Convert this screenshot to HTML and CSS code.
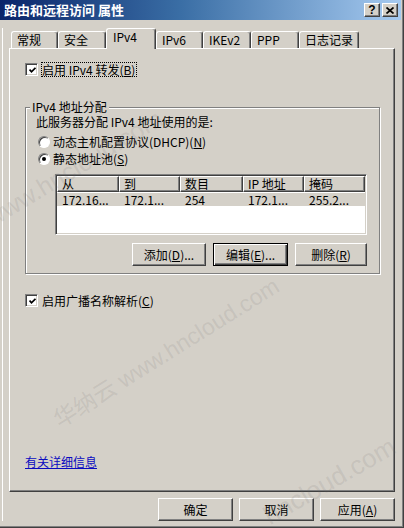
FILE: index.html
```html
<!DOCTYPE html>
<html lang="zh-CN">
<head>
<meta charset="utf-8">
<title>路由和远程访问 属性</title>
<link rel="stylesheet" href="styles.css">
</head>
<body>
<div class="window">
  <div class="titlebar">
    <span class="title">路由和远程访问 属性</span>
    <div class="tbtns">
      <span class="tbtn q">?</span>
      <span class="tbtn"><svg width="8" height="7" viewBox="0 0 8 7"><path d="M0.5 0.5L7.5 6.5M7.5 0.5L0.5 6.5" stroke="#000" stroke-width="1.7"/></svg></span>
    </div>
  </div>
  <div class="content">
    <div class="tabs">
      <div class="tab w47">常规</div>
      <div class="tab w48">安全</div>
      <div class="tab sel w50">IPv4</div>
      <div class="tab w47">IPv6</div>
      <div class="tab w48">IKEv2</div>
      <div class="tab w48">PPP</div>
      <div class="tab w60">日志记录</div>
    </div>
    <div class="panel">
      <div class="chk-row">
        <span class="checkbox"><svg width="7" height="7" viewBox="0 0 7 7"><path d="M0.5 2.5L2.5 4.8L6.5 0.8" fill="none" stroke="#000" stroke-width="1.8"/></svg></span>
        <span class="label focus">启用 IPv4 转发(<u>B</u>)</span>
      </div>
      <div class="group">
        <div class="cap">IPv4 地址分配</div>
        <div class="desc">此服务器分配 IPv4 地址使用的是:</div>
        <div class="radio-row first"><span class="radio"></span><span>动态主机配置协议(DHCP)(<u>N</u>)</span></div>
        <div class="radio-row"><span class="radio on"></span><span>静态地址池(<u>S</u>)</span></div>
        <div class="list">
          <div class="lv-head">
            <div class="hc c1">从</div>
            <div class="hc c2">到</div>
            <div class="hc c3">数目</div>
            <div class="hc c4">IP 地址</div>
            <div class="hc c5">掩码</div>
          </div>
          <div class="lv-row">
            <div class="rc c1">172.16...</div>
            <div class="rc c2">172.1...</div>
            <div class="rc c3">254</div>
            <div class="rc c4">172.1...</div>
            <div class="rc c5">255.2...</div>
          </div>
        </div>
        <div class="btn-row">
          <span class="btn w74">添加(<u>D</u>)...</span>
          <span class="btn default w75">编辑(<u>E</u>)...</span>
          <span class="btn w72">删除(<u>R</u>)</span>
        </div>
      </div>
      <div class="chk-row second">
        <span class="checkbox"><svg width="7" height="7" viewBox="0 0 7 7"><path d="M0.5 2.5L2.5 4.8L6.5 0.8" fill="none" stroke="#000" stroke-width="1.8"/></svg></span>
        <span class="label">启用广播名称解析(<u>C</u>)</span>
      </div>
      <div class="link-row"><a class="link">有关详细信息</a></div>
    </div>
    <div class="footer">
      <span class="btn w75">确定</span>
      <span class="btn w75">取消</span>
      <span class="btn w75">应用(<u>A</u>)</span>
    </div>
  </div>
  <div class="wm wm1">www.hncloud.com</div>
  <div class="wm wm2">华纳云 www.hncloud.com</div>
  <div class="wm wm3">hncloud.com</div>
</div>
</body>
</html>
```
FILE: styles.css
```css
* { box-sizing: border-box; }
html, body { margin: 0; padding: 0; }
body {
  width: 404px;
  height: 528px;
  overflow: hidden;
  background: #d4d0c8;
  font-family: "Noto Sans CJK SC", "Liberation Sans", sans-serif;
  font-size: 12px;
  color: #000;
}
.window {
  position: relative;
  width: 404px;
  height: 528px;
  background: #d4d0c8;
  border-right: 1px solid #404040;
  border-bottom: 1px solid #404040;
  box-shadow: inset -1px -1px #808080;
  padding-right: 2px;
  overflow: hidden;
}
.titlebar {
  height: 20px;
  display: flex;
  align-items: center;
  justify-content: space-between;
  padding: 0 3px 0 4px;
  background: linear-gradient(to right, #0a246a 0%, #3a6ea5 45%, #a6caf0 100%);
  color: #fff;
  font-weight: bold;
  font-size: 13px;
}
.title { line-height: 16px; }
.tbtns { display: flex; gap: 2px; }
.tbtn {
  width: 16px;
  height: 14px;
  background: #d4d0c8;
  border: 1px solid;
  border-color: #fff #404040 #404040 #fff;
  box-shadow: inset -1px -1px #808080;
  display: flex;
  align-items: center;
  justify-content: center;
  color: #000;
  font: bold 12px "Liberation Sans", sans-serif;
}
.content {
  padding: 0 6px 0 9px;
  background: linear-gradient(to right, transparent 2px, #fff 2px, #fff 3px, transparent 3px);
}
.tabs {
  display: flex;
  align-items: flex-end;
  height: 20px;
  margin: 8px 0 0 2px;
}
.tab {
  height: 17px;
  border: 1px solid #fff;
  border-bottom: 0;
  border-right-color: #404040;
  box-shadow: inset -1px 0 #808080;
  border-radius: 3px 3px 0 0;
  padding-left: 5px;
  line-height: 15px;
  white-space: nowrap;
}
.tab.sel {
  height: 21px;
  margin-bottom: -1px;
  position: relative;
  z-index: 1;
  background: #d4d0c8;
  padding-left: 6px;
  line-height: 16px;
}
.w47 { width: 47px; }
.w48 { width: 48px; }
.w50 { width: 50px; }
.w60 { width: 60px; }
.w72 { width: 72px; }
.w74 { width: 74px; }
.w75 { width: 75px; }
.panel {
  height: 444px;
  border: 1px solid;
  border-color: #fff #404040 #404040 #fff;
  box-shadow: inset -1px -1px #808080;
  padding: 13px 0 0 15px;
}
.chk-row {
  display: flex;
  align-items: center;
  height: 15px;
  gap: 3px;
}
.chk-row.second { margin-top: 19px; }
.checkbox {
  width: 13px;
  height: 13px;
  flex: none;
  border: 1px solid;
  border-color: #808080 #fff #fff #808080;
  box-shadow: inset 1px 1px #404040, inset -1px -1px #d4d0c8;
  background: #fff;
  display: flex;
  align-items: center;
  justify-content: center;
  padding: 1px 0 0 1px;
}
.label {
  border: 1px solid transparent;
  line-height: 13px;
  white-space: nowrap;
}
.label.focus { border: 1px dotted #000; padding-right: 1px; }
.group {
  width: 355px;
  height: 167px;
  margin-top: 30px;
  border: 1px solid #808080;
  box-shadow: inset 1px 1px #fff, 1px 1px #fff;
  padding-left: 10px;
}
.cap {
  width: fit-content;
  background: #d4d0c8;
  padding: 0 2px;
  line-height: 14px;
  margin: -8px 0 0 -6px;
}
.desc { line-height: 14px; margin-top: 1px; }
.radio-row {
  display: flex;
  align-items: center;
  height: 17px;
  gap: 3px;
  padding-left: 2px;
  white-space: nowrap;
}
.radio-row.first { margin-top: 4px; }
.radio {
  width: 12px;
  height: 12px;
  flex: none;
  border-radius: 50%;
  border: 1px solid;
  border-color: #808080 #fff #fff #808080;
  box-shadow: inset 1px 1px #404040;
  background: #fff;
  display: flex;
  align-items: center;
  justify-content: center;
}
.radio.on::after {
  content: "";
  width: 4px;
  height: 4px;
  border-radius: 50%;
  background: #000;
}
.list {
  width: 312px;
  height: 61px;
  margin: 7px 0 0 19px;
  border: 1px solid;
  border-color: #808080 #fff #fff #808080;
  box-shadow: inset 1px 1px #404040, inset -1px -1px #d4d0c8;
  background: #fff;
  padding: 1px;
}
.lv-head { display: flex; height: 16px; }
.hc {
  border: 1px solid;
  border-color: #fff #404040 #404040 #fff;
  box-shadow: inset -1px -1px #808080;
  background: #d4d0c8;
  padding-left: 4px;
  line-height: 13px;
  white-space: nowrap;
}
.lv-row {
  display: flex;
  height: 13px;
  margin-top: 1px;
  background: #d4d0c8;
}
.rc { padding-left: 5px; line-height: 13px; white-space: nowrap; }
.c1 { width: 62px; }
.c2 { width: 61px; }
.c3 { width: 63px; }
.c4 { width: 61px; }
.c5 { width: 61px; }
.btn-row {
  display: flex;
  justify-content: flex-end;
  gap: 7px;
  width: 312px;
  margin: 8px 0 0 19px;
}
.btn {
  height: 23px;
  border: 1px solid;
  border-color: #fff #404040 #404040 #fff;
  box-shadow: inset -1px -1px #808080;
  display: flex;
  align-items: center;
  justify-content: center;
  background: #d4d0c8;
  white-space: nowrap;
}
.btn.default {
  border-color: #000;
  box-shadow: inset 1px 1px #fff, inset -1px -1px #404040, inset -2px -2px #808080;
}
.link-row { margin-top: 147px; line-height: 14px; }
.link { color: #0a0ac0; text-decoration: underline; }
.footer {
  display: flex;
  justify-content: flex-end;
  gap: 6px;
  margin-top: 6px;
}
.wm {
  position: absolute;
  font-family: "Liberation Sans", "Noto Sans CJK SC", sans-serif;
  color: rgba(110, 110, 110, 0.14);
  transform-origin: left bottom;
  white-space: nowrap;
  pointer-events: none;
  line-height: 1;
}
.wm1 { left: -6px; top: 206px; font-size: 25px; transform: rotate(-31deg); }
.wm2 { left: 62px; top: 409px; font-size: 23px; transform: rotate(-32deg); }
.wm3 { left: 272px; top: 503px; font-size: 26px; transform: rotate(-30deg); }
```
